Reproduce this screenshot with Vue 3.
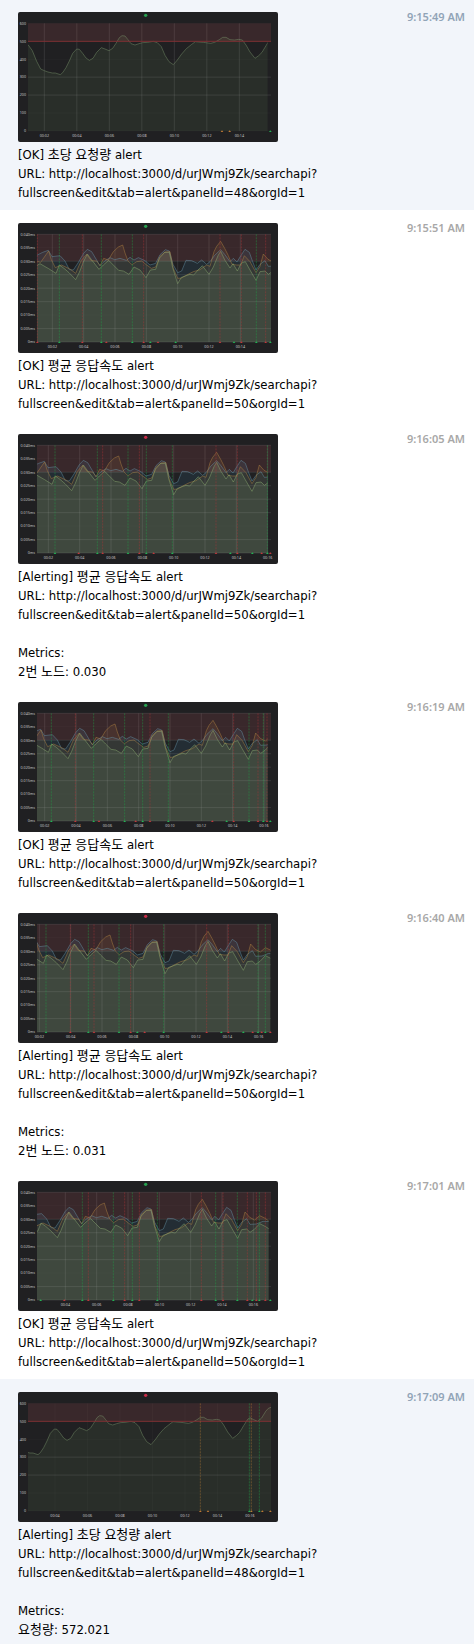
<script setup>
const base = 'http://localhost:3000/d/urJWmj9Zk/searchapi?'
const query = (id) => `fullscreen&edit&tab=alert&panelId=${id}&orgId=1`

const rate = [
  [10, 96], [20, 92], [30, 98], [43, 116], [56, 148], [68, 171], [79, 176], [90, 180], [103, 183], [112, 183], [127, 188], [134, 182],
  [144, 167], [154, 147], [164, 124], [176, 111], [184, 112], [194, 124], [204, 138], [214, 145], [225, 139], [236, 121],
  [250, 107], [261, 111], [273, 116], [284, 109], [294, 94], [304, 77], [312, 71], [321, 72], [330, 83], [339, 95],
  [351, 99], [363, 95], [374, 92], [388, 91], [406, 88], [418, 92], [430, 104], [441, 130], [453, 149], [466, 158],
  [478, 144], [491, 126], [505, 110], [520, 98], [532, 89], [556, 91], [578, 94], [590, 91], [604, 83], [614, 76],
  [624, 76], [636, 83], [650, 84], [662, 82], [673, 84], [684, 99], [696, 120], [711, 139], [722, 131], [732, 121],
  [744, 101], [756, 82], [763, 77], [774, 83], [786, 88], [798, 78], [810, 58], [818, 49], [826, 46]
]
const green = [
  [50, 132], [66, 122], [78, 129], [92, 137], [114, 151], [124, 126], [138, 136], [153, 149], [173, 170], [184, 148], [196, 117], [208, 93],
  [222, 112], [243, 139], [256, 126], [272, 112], [286, 126], [302, 142], [316, 144], [333, 154], [348, 132],
  [366, 141], [384, 164], [397, 141], [413, 139], [424, 106], [440, 88], [454, 88], [464, 134], [479, 182],
  [490, 163], [516, 154], [527, 156], [540, 141], [553, 128], [573, 154], [586, 132], [600, 98], [608, 85],
  [621, 112], [636, 135], [645, 122], [658, 144], [670, 120], [682, 116], [696, 141], [714, 172], [726, 146],
  [741, 144], [751, 154], [764, 145], [780, 128], [798, 137], [816, 149]
]
const blue = [
  [50, 100], [74, 88], [91, 82], [102, 101], [126, 98], [141, 114], [154, 140], [166, 141], [180, 120], [196, 92], [208, 79],
  [221, 86], [234, 108], [246, 128], [260, 114], [276, 104], [290, 110], [306, 106], [325, 112], [336, 103],
  [348, 111], [361, 104], [381, 113], [396, 126], [413, 121], [426, 95], [442, 80], [454, 84], [465, 124],
  [479, 149], [491, 144], [504, 112], [521, 113], [538, 121], [551, 111], [566, 124], [576, 116], [590, 97],
  [608, 80], [620, 94], [636, 116], [646, 106], [657, 117], [666, 102], [681, 79], [694, 88], [704, 116],
  [714, 141], [726, 124], [741, 113], [751, 130], [770, 129], [790, 121], [816, 122]
]
const orange = [
  [50, 112], [68, 118], [84, 95], [92, 84], [100, 110], [112, 134], [130, 126], [156, 138], [173, 151], [190, 112], [206, 94], [220, 113],
  [236, 114], [246, 128], [257, 106], [271, 111], [286, 86], [301, 72], [314, 66], [321, 90], [330, 114],
  [342, 125], [356, 116], [371, 114], [386, 126], [400, 136], [413, 132], [426, 100], [441, 87], [456, 86],
  [466, 136], [479, 166], [491, 165], [506, 156], [526, 146], [546, 140], [566, 126], [576, 130], [588, 86],
  [596, 70], [608, 55], [620, 76], [631, 98], [642, 124], [656, 126], [668, 126], [679, 98], [696, 116],
  [714, 149], [726, 130], [736, 93], [750, 109], [765, 117], [780, 104], [795, 111], [816, 126]
]

const points = (data, shift) => data.map(([x, y]) => `${x + shift},${y}`).join(' ')
const area = (data, shift) =>
  `${data[0][0] + shift},357 ${points(data, shift)} ${data[data.length - 1][0] + shift},357`

const labels = (from, count, start, step) =>
  Array.from({ length: count }, (_, i) => ({
    x: start + i * step,
    text: `00:${String(from + i * 2).padStart(2, '0')}`
  }))

const rateAxis = ['600', '500', '400', '300', '200', '100', '0'].map((text, i) => ({
  text, y: 34 + i * 53.8, faint: i !== 3 && i !== 4
}))
const speedAxis = ['0.040ms', '0.035ms', '0.030ms', '0.025ms', '0.020ms', '0.015ms', '0.010ms', '0.005ms', '0ms'].map(
  (text, i) => ({ text, y: 34 + i * 40.4, faint: i === 1 || i === 6 })
)

const rateChart = (shift, end, ticks, marks, dots) => ({
  kind: 'rate', left: 30, end, limit: 88, axis: rateAxis, ticks, marks, dots,
  series: [{ name: 'load', data: rate, shift }]
})
const speedChart = (shift, end, ticks, marks, dots) => ({
  kind: 'speed', left: 57, end, limit: 114, axis: speedAxis, ticks, marks, dots,
  series: [
    { name: 'blue', data: blue, shift },
    { name: 'orange', data: orange, shift },
    { name: 'green', data: green, shift }
  ]
})

const messages = [
  {
    time: '9:15:49 AM', state: 'OK', title: '초당 요청량', panel: 48, own: true,
    chart: rateChart(0, 749, labels(2, 7, 79, 97.5), {}, { orange: [612, 635], green: [757] })
  },
  {
    time: '9:15:51 AM', state: 'OK', title: '평균 응답속도', panel: 50,
    chart: speedChart(0, 759, labels(2, 7, 103, 94),
      { red: [58, 193, 377, 606, 670, 743], green: [124, 250, 343, 715] },
      { red: [265, 420], green: [397, 473, 648, 757] })
  },
  {
    time: '9:16:05 AM', state: 'Alerting', title: '평균 응답속도', panel: 50, metric: '2번 노드: 0.030',
    chart: speedChart(-12, 749, labels(2, 8, 91, 94),
      { red: [254, 364, 594, 658], green: [111, 238, 330, 385, 463, 748] },
      { red: [182, 407, 731, 757], green: [637, 703] })
  },
  {
    time: '9:16:19 AM', state: 'OK', title: '평균 응답속도', panel: 50,
    chart: speedChart(-23, 749, labels(2, 8, 80, 94),
      { red: [172, 396, 647, 720, 747], green: [100, 227, 320, 374, 451, 693, 736] },
      { red: [243, 353, 583], green: [626, 757] })
  },
  {
    time: '9:16:40 AM', state: 'Alerting', title: '평균 응답속도', panel: 50, metric: '2번 노드: 0.031',
    chart: speedChart(-38, 757, labels(2, 8, 64, 94),
      { red: [157, 228, 338, 566, 631], green: [84, 211, 303, 437, 720, 742] },
      { red: [380, 704, 731, 757], green: [358, 610, 676] })
  },
  {
    time: '9:17:01 AM', state: 'OK', title: '평균 응답속도', panel: 50,
    chart: speedChart(-55, 752, labels(4, 7, 142, 94),
      { red: [211, 320, 364, 550, 615, 688, 715, 742], green: [193, 286, 343, 418, 593, 658, 724] },
      { red: [139], green: [68, 703, 757] })
  },
  {
    time: '9:17:09 AM', state: 'Alerting', title: '초당 요청량', panel: 48, own: true, metric: '요청량: 572.021',
    chart: {
      ...rateChart(-67, 759, labels(4, 7, 111, 97.5),
        { orange: [547, 700], green: [694, 724] }, { orange: [570, 733, 757] }),
      faintTicks: true
    }
  }
]
</script>

<template>
  <main class="feed">
    <article v-for="(m, i) in messages" :key="m.time" class="message" :class="{ own: m.own }">
      <div class="content">
        <svg class="chart" :class="m.chart.kind" viewBox="0 0 780 390" role="img" :aria-label="m.title">
          <defs>
            <clipPath :id="`plot-${i}`">
              <rect :x="m.chart.left" y="34" :width="m.chart.end - m.chart.left" height="324" />
            </clipPath>
          </defs>
          <circle cx="383" cy="10" r="5" :class="m.state === 'OK' ? 'ok' : 'bad'" />
          <g :clip-path="`url(#plot-${i})`">
            <polygon v-for="s in m.chart.series" :key="s.name" class="fill" :class="s.name" :points="area(s.data, s.shift)" />
          </g>
          <path v-for="a in m.chart.axis" :key="a.text" class="grid" :class="{ faint: a.faint }" :d="`M${m.chart.left} ${a.y}H759`" />
          <path v-for="t in m.chart.ticks" :key="t.text" class="grid" :class="{ faint: m.chart.faintTicks }" :d="`M${t.x} 34V357`" />
          <rect class="zone" :x="m.chart.left" y="34" :width="759 - m.chart.left" :height="m.chart.limit - 34" />
          <g :clip-path="`url(#plot-${i})`">
            <polyline v-for="s in m.chart.series" :key="s.name" class="line" :class="s.name" :points="points(s.data, s.shift)" />
          </g>
          <path v-if="m.chart.kind === 'rate'" class="limit" d="M30 88H759" />
          <g v-for="(xs, color) in m.chart.marks" :key="color" :class="color">
            <path v-for="x in xs" :key="x" class="mark" :d="`M${x} 34V357`" />
            <path v-for="x in xs" :key="-x" class="dot" :d="`M${x - 4} 360l4 -5l4 5z`" />
          </g>
          <g v-for="(xs, color) in m.chart.dots" :key="color" :class="color">
            <path v-for="x in xs" :key="x" class="dot" :d="`M${x - 4} 360l4 -5l4 5z`" />
          </g>
          <text v-for="a in m.chart.axis" :key="a.text" class="label" :x="m.chart.left - 6" :y="a.y + 4" text-anchor="end">{{ a.text }}</text>
          <text v-for="t in m.chart.ticks" :key="t.text" class="label" :x="t.x" y="375" text-anchor="middle">{{ t.text }}</text>
        </svg>
        <p>[{{ m.state }}] {{ m.title }} alert</p>
        <p>URL: <a :href="base + query(m.panel)">{{ base }}<br>{{ query(m.panel) }}</a></p>
        <p v-if="m.metric" class="metrics">Metrics:<br>{{ m.metric }}</p>
      </div>
      <time>{{ m.time }}</time>
    </article>
  </main>
</template>

<style>
body {
  margin: 0;
  background: #fff;
}
</style>

<style scoped>
.feed {
  font: 13px/19px "DejaVu Sans Condensed", "Noto Sans CJK KR", sans-serif;
  color: #000;
}
.message {
  display: flex;
  justify-content: space-between;
  align-items: flex-start;
  padding: 13px 9px 8px 18px;
}
.message:first-child {
  padding-top: 12px;
}
.message:last-child {
  padding-bottom: 5px;
}
.own {
  background: #f2f5fa;
}
.content {
  min-width: 0;
}
.chart {
  display: block;
  width: 260px;
  height: 130px;
  margin-bottom: 3px;
  border-radius: 2px;
  background: #202022;
}
p {
  margin: 0;
}
a {
  color: inherit;
  text-decoration: none;
}
.metrics {
  margin-top: 19px;
}
time {
  flex: none;
  font-family: "Noto Sans", sans-serif;
  font-size: 11px;
  font-weight: 600;
  line-height: 10px;
  color: #a8a8a8;
}
.own time {
  color: #91a4b7;
}
.ok {
  fill: #27a04f;
}
.bad {
  fill: #c72c48;
}
.grid {
  stroke: #c8c8c8;
  stroke-opacity: 0.13;
  stroke-width: 3;
}
.grid.faint {
  stroke-opacity: 0.03;
}
.zone {
  fill: #ea6570;
  fill-opacity: 0.13;
}
.limit {
  stroke: #7c3033;
  stroke-width: 3;
}
.fill.load {
  fill: #7eb26d;
  fill-opacity: 0.1;
}
.fill.blue {
  fill: #3c82a5;
  fill-opacity: 0.14;
}
.fill.orange {
  fill: #d29646;
  fill-opacity: 0.1;
}
.fill.green {
  fill: #82af73;
  fill-opacity: 0.15;
}
.line {
  fill: none;
  stroke-width: 2;
  stroke-opacity: 0.65;
}
.line.load {
  stroke: #7f9b72;
}
.line.blue {
  stroke: #6a9bb0;
}
.line.orange {
  stroke: #b98a45;
}
.line.green {
  stroke: #95b878;
}
.mark {
  fill: none;
  stroke-width: 2;
  stroke-dasharray: 6 3;
  stroke-opacity: 0.65;
}
.red .mark {
  stroke: #b33338;
}
.green .mark {
  stroke: #1fa648;
}
.orange .mark {
  stroke: #b87b35;
}
.red .dot {
  fill: #c0393c;
}
.green .dot {
  fill: #22b455;
}
.orange .dot {
  fill: #c07a35;
}
.label {
  font: 11px "Noto Sans", sans-serif;
  fill: #c4c4c6;
}
</style>
